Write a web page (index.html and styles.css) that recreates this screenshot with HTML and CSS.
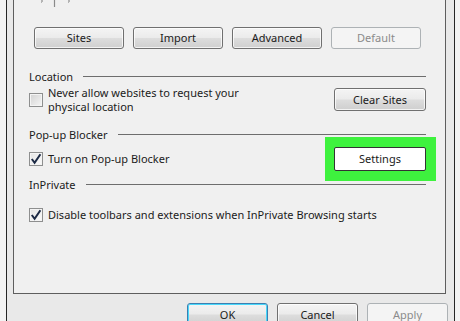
FILE: index.html
```html
<!DOCTYPE html>
<html>
    <head>
        <meta charset="utf-8" />
        <title>Internet Options - Privacy</title>
        <link rel="stylesheet" href="styles.css">
    </head>
    <body>
        <div class="dialog">
            <!-- 分頁內容 -->
            <div class="panel">
                <!-- 滑桿刻度（上方被裁切） -->
                <div class="slider">
                    <svg width="40" height="8" viewBox="0 0 40 8">
                        <path d="M1.5 0v3M2.5 0v2" stroke="#b4b4b4" stroke-width="1" />
                        <path d="M14.5 0v7" stroke="#8a8a8a" stroke-width="1.2" />
                        <path d="M28.5 0v3M29.5 0v2" stroke="#b4b4b4" stroke-width="1" />
                    </svg>
                </div>

                <div class="button-row">
                    <button type="button" class="btn">Sites</button>
                    <button type="button" class="btn">Import</button>
                    <button type="button" class="btn">Advanced</button>
                    <button type="button" class="btn disabled">Default</button>
                </div>

                <div class="group-title first"><span>Location</span><i></i></div>
                <div class="row location">
                    <label class="check">
                        <span class="box"></span>
                        <span class="text">Never allow websites to request your<br>physical location</span>
                    </label>
                    <button type="button" class="btn side">Clear Sites</button>
                </div>

                <div class="group-title"><span>Pop-up Blocker</span><i></i></div>
                <div class="row popup">
                    <label class="check">
                        <span class="box checked">
                            <svg width="12" height="12" viewBox="0 0 12 12"><path d="M1.8 6l2.8 3.8L10.4 1.2" fill="none" stroke="#1c2a45" stroke-width="2" /></svg>
                        </span>
                        <span class="text">Turn on Pop-up Blocker</span>
                    </label>
                    <!-- 綠色醒目框 -->
                    <span class="highlight">
                        <button type="button" class="btn side focus">Settings</button>
                    </span>
                </div>

                <div class="group-title"><span>InPrivate</span><i></i></div>
                <div class="row inprivate">
                    <label class="check">
                        <span class="box checked">
                            <svg width="12" height="12" viewBox="0 0 12 12"><path d="M1.8 6l2.8 3.8L10.4 1.2" fill="none" stroke="#1c2a45" stroke-width="2" /></svg>
                        </span>
                        <span class="text">Disable toolbars and extensions when InPrivate Browsing starts</span>
                    </label>
                </div>
            </div>

            <!-- 底部按鈕 -->
            <div class="footer">
                <button type="button" class="btn default">OK</button>
                <button type="button" class="btn">Cancel</button>
                <button type="button" class="btn disabled">Apply</button>
            </div>
        </div>
    </body>
</html>
```

FILE: styles.css
```css
/* 整體背景與字型 */
body {
    margin: 0;
    height: 321px;
    overflow: hidden;
    background-color: #f3f3f3;
    font-family: "Noto Sans", "Liberation Sans", sans-serif;
    font-size: 11px;
    color: #1b1b1b;
}

/* 對話框外框 */
.dialog {
    margin-left: 6px;
    width: 449px;
    height: 321px;
    box-sizing: border-box;
    border-left: 1px solid #262626;
    border-right: 1px solid #262626;
    background-color: #e9e9e9;
}

/* 分頁內容區 */
.panel {
    margin-left: 6px;
    width: 433px;
    height: 294px;
    box-sizing: border-box;
    border: 1px solid #5e5e5e;
    border-top: none;
    padding: 0 19px 0 15px;
    background-color: #f0f0f0;
}

.slider {
    height: 8px;
    padding-left: 11px;
}

.slider svg {
    display: block;
}

/* 按鈕樣式 */
.btn {
    font-family: inherit;
    font-size: 11px;
    line-height: 14px;
    color: #1b1b1b;
    height: 23px;
    padding: 0;
    border: 1px solid #707070;
    border-radius: 3px;
    background: linear-gradient(#f4f4f4 0%, #ebebeb 48%, #dddddd 52%, #cfcfcf 100%);
    box-shadow: inset 0 0 0 1px rgba(255, 255, 255, 0.75);
    box-sizing: border-box;
}

.btn.disabled {
    color: #8b8b8b;
    border-color: #adb2b5;
    background: #f4f4f4;
    box-shadow: none;
}

.btn.default {
    border-color: #3c7fb1;
    box-shadow: inset 0 0 0 1px #48d8fb;
}

.button-row {
    display: grid;
    grid-template-columns: repeat(4, 90px);
    gap: 9px;
    margin: 19px 0 0 5px;
}

.button-row .btn {
    height: 22px;
}

/* 群組標題與分隔線 */
.group-title {
    display: flex;
    align-items: center;
    gap: 10px;
    height: 16px;
    margin-top: 15px;
}

.group-title.first {
    margin-top: 19px;
}

.group-title i {
    flex: 1;
    border-top: 1px solid #6d6d6d;
}

.row {
    display: flex;
    align-items: center;
    justify-content: space-between;
}

.row.location {
    height: 23px;
    margin-top: 4px;
}

.row.popup {
    height: 24px;
    margin-top: 5px;
}

.row.popup + .group-title {
    margin-top: 5px;
}

.row.inprivate {
    height: 16px;
    margin-top: 15px;
}

/* 核取方塊 */
.check {
    display: flex;
    align-items: center;
    gap: 5px;
}

.check .text {
    line-height: 14px;
}

.box {
    width: 14px;
    height: 14px;
    box-sizing: border-box;
    border: 1px solid #8e8f8f;
    background: linear-gradient(135deg, #d2d2d2, #f6f6f6);
    box-shadow: inset 0 0 0 1px #f4f4f4;
    display: flex;
    align-items: center;
    justify-content: center;
}

.box.checked {
    background: linear-gradient(135deg, #e4e4e4, #fbfbfb);
}

.btn.side {
    width: 92px;
}

/* 醒目標示（綠框），不影響排版 */
.highlight {
    display: block;
    background-color: #3ef23e;
    padding: 10px 10px 10px 9px;
    margin: -10px -10px -10px -9px;
}

.btn.focus {
    display: block;
    height: 24px;
    border-color: #333333;
    border-radius: 2px;
    background: #ffffff;
    box-shadow: none;
}

.footer {
    display: flex;
    justify-content: flex-end;
    gap: 9px;
    padding: 9px 6px 0 0;
}

.footer .btn {
    width: 81px;
}
```
